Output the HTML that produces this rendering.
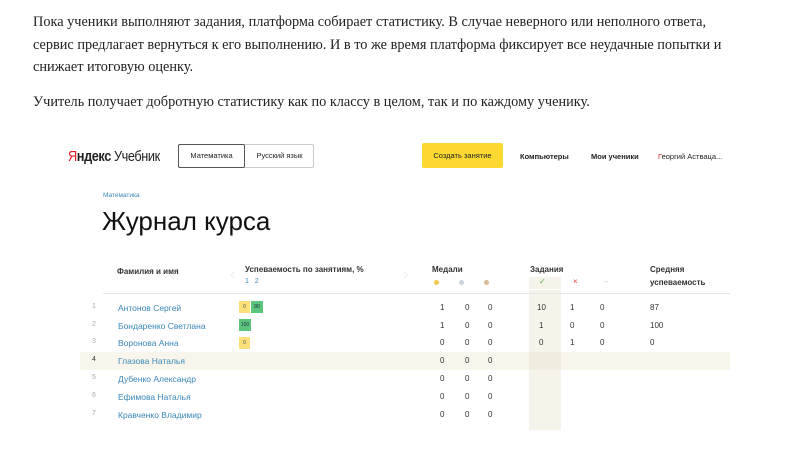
<!DOCTYPE html>
<html><head><meta charset="utf-8"><style>
*{margin:0;padding:0;box-sizing:border-box}
body{width:800px;height:450px;background:#fff;position:relative;overflow:hidden;font-family:"Liberation Sans",sans-serif;color:#222}
.a{position:absolute;white-space:nowrap}
.p{font-family:"Liberation Serif","Noto Serif CJK SC",serif;font-size:14.3px;color:#222;left:33px}
.s{font-size:8px}
.b{font-size:8px;font-weight:bold;color:#333}
.n{font-size:8.5px;color:#3a87b8}
.i{font-size:7px;color:#aaa}
.d{font-size:8px;color:#333}
</style></head><body>
<div class="a p" style="top:14px">Пока ученики выполняют задания, платформа собирает статистику. В случае неверного или неполного ответа,</div>
<div class="a p" style="top:37px">сервис предлагает вернуться к его выполнению. И в то же время платформа фиксирует все неудачные попытки и</div>
<div class="a p" style="top:59px">снижает итоговую оценку.</div>
<div class="a p" style="top:94px">Учитель получает добротную статистику как по классу в целом, так и по каждому ученику.</div>

<div class="a" style="left:68px;top:148px;font-size:15px;letter-spacing:-0.5px;transform:scaleX(0.85);transform-origin:left"><span style="color:#e31e24">Я</span><b style="font-weight:bold">ндекс</b> Учебник</div>
<div class="a" style="left:178px;top:144px;width:136px;height:24px;border:1px solid #ccc;border-radius:2px"></div>
<div class="a" style="left:178px;top:144px;width:67px;height:24px;border:1.5px solid #555;border-radius:2px;font-size:7.5px;line-height:21px;text-align:center">Математика</div>
<div class="a" style="left:245px;top:144px;width:69px;height:24px;font-size:7.5px;line-height:24px;text-align:center">Русский язык</div>
<div class="a" style="left:422px;top:143px;width:81px;height:25px;background:#fcd832;border-radius:2px;font-size:7.5px;line-height:25px;text-align:center">Создать занятие</div>
<div class="a" style="left:520px;top:152px;font-size:7.5px;font-weight:bold">Компьютеры</div>
<div class="a" style="left:591px;top:152px;font-size:7.5px;font-weight:bold">Мои ученики</div>
<div class="a" style="left:658px;top:152px;font-size:7.5px"><span style="color:#e31e24">Г</span>еоргий Аствацa...</div>

<div class="a" style="left:103px;top:192px;font-size:6.5px;color:#3a87b8">Математика</div>
<div class="a" style="left:102px;top:206px;font-size:26px;color:#111">Журнал курса</div>

<div class="a" style="left:529px;top:290px;width:32px;height:140px;background:#f6f4ea"></div>
<div class="a" style="left:80px;top:352px;width:650px;height:18px;background:#f8f6ec"></div>
<div class="a" style="left:529px;top:352px;width:32px;height:18px;background:#f0ede0"></div>
<div class="a" style="left:103px;top:293px;width:627px;height:1px;background:#e6e6e6"></div>

<div class="a b" style="left:117px;top:267px">Фамилия и имя</div>
<div class="a b" style="left:245px;top:265px">Успеваемость по занятиям, %</div>
<div class="a" style="left:245px;top:278px;font-size:7px;color:#3a87b8">1&nbsp;&nbsp; 2</div>
<div class="a" style="left:230px;top:266px;font-size:16px;color:#eee">‹</div>
<div class="a" style="left:403px;top:266px;font-size:16px;color:#eee">›</div>
<div class="a b" style="left:432px;top:265px">Медали</div>
<div class="a" style="left:434px;top:280px;width:5px;height:5px;border-radius:50%;background:#f2c94c"></div>
<div class="a" style="left:459px;top:280px;width:5px;height:5px;border-radius:50%;background:#ccd3dc"></div>
<div class="a" style="left:484px;top:280px;width:5px;height:5px;border-radius:50%;background:#d8b99a"></div>
<div class="a b" style="left:530px;top:265px">Задания</div>
<div class="a" style="left:529px;top:277px;width:32px;height:12px;background:#f6f4ea"></div>
<div class="a" style="left:539px;top:277px;font-size:8px;color:#4caf50">✓</div>
<div class="a" style="left:573px;top:277px;font-size:8px;color:#e53935">×</div>
<div class="a" style="left:604px;top:277px;font-size:8px;color:#ccc">–</div>
<div class="a b" style="left:650px;top:265px">Средняя</div>
<div class="a b" style="left:650px;top:278px">успеваемость</div>

<div class="a i" style="left:92px;top:303px">1</div><div class="a n" style="left:118px;top:303px">Антонов Сергей</div>
<div class="a i" style="left:92px;top:321px">2</div><div class="a n" style="left:118px;top:321px">Бондаренко Светлана</div>
<div class="a i" style="left:92px;top:338px">3</div><div class="a n" style="left:118px;top:338px">Воронова Анна</div>
<div class="a i" style="left:92px;top:356px;color:#333">4</div><div class="a n" style="left:118px;top:356px">Глазова Наталья</div>
<div class="a i" style="left:92px;top:374px">5</div><div class="a n" style="left:118px;top:374px">Дубенко Александр</div>
<div class="a i" style="left:92px;top:392px">6</div><div class="a n" style="left:118px;top:392px">Ефимова Наталья</div>
<div class="a i" style="left:92px;top:410px">7</div><div class="a n" style="left:118px;top:410px">Кравченко Владимир</div>

<div class="a" style="left:239px;top:301px;width:11px;height:12px;background:#fbe07a;font-size:5.5px;line-height:12px;text-align:center;color:#555">0</div>
<div class="a" style="left:251px;top:301px;width:12px;height:12px;background:#5cc47c;font-size:5.5px;line-height:12px;text-align:center;color:#234">90</div>
<div class="a" style="left:239px;top:319px;width:12px;height:12px;background:#5cc47c;font-size:5px;line-height:12px;text-align:center;color:#234">100</div>
<div class="a" style="left:239px;top:337px;width:11px;height:12px;background:#fbe07a;font-size:5.5px;line-height:12px;text-align:center;color:#555">0</div>

<div class="a d" style="left:440px;top:303px">1</div><div class="a d" style="left:465px;top:303px">0</div><div class="a d" style="left:488px;top:303px">0</div>
<div class="a d" style="left:440px;top:321px">1</div><div class="a d" style="left:465px;top:321px">0</div><div class="a d" style="left:488px;top:321px">0</div>
<div class="a d" style="left:440px;top:338px">0</div><div class="a d" style="left:465px;top:338px">0</div><div class="a d" style="left:488px;top:338px">0</div>
<div class="a d" style="left:440px;top:356px">0</div><div class="a d" style="left:465px;top:356px">0</div><div class="a d" style="left:488px;top:356px">0</div>
<div class="a d" style="left:440px;top:374px">0</div><div class="a d" style="left:465px;top:374px">0</div><div class="a d" style="left:488px;top:374px">0</div>
<div class="a d" style="left:440px;top:392px">0</div><div class="a d" style="left:465px;top:392px">0</div><div class="a d" style="left:488px;top:392px">0</div>
<div class="a d" style="left:440px;top:410px">0</div><div class="a d" style="left:465px;top:410px">0</div><div class="a d" style="left:488px;top:410px">0</div>

<div class="a d" style="left:537px;top:303px">10</div><div class="a d" style="left:570px;top:303px">1</div><div class="a d" style="left:600px;top:303px">0</div><div class="a d" style="left:650px;top:303px">87</div>
<div class="a d" style="left:539px;top:321px">1</div><div class="a d" style="left:570px;top:321px">0</div><div class="a d" style="left:600px;top:321px">0</div><div class="a d" style="left:650px;top:321px">100</div>
<div class="a d" style="left:539px;top:338px">0</div><div class="a d" style="left:570px;top:338px">1</div><div class="a d" style="left:600px;top:338px">0</div><div class="a d" style="left:650px;top:338px">0</div>
</body></html>
